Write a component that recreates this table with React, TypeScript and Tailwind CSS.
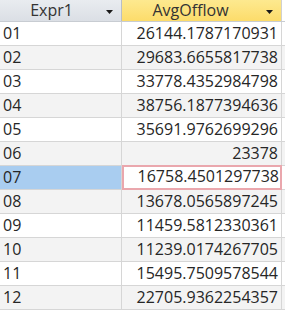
const rows = [
  ['01', '26144.1787170931'],
  ['02', '29683.6655817738'],
  ['03', '33778.4352984798'],
  ['04', '38756.1877394636'],
  ['05', '35691.9762699296'],
  ['06', '23378'],
  ['07', '16758.4501297738'],
  ['08', '13678.0565897245'],
  ['09', '11459.5812330361'],
  ['10', '11239.0174267705'],
  ['11', '15495.7509578544'],
  ['12', '22705.9362254357'],
];

const Arrow = () => (
  <svg width="7" height="4" viewBox="0 0 7 4" className="absolute right-[8px] top-[10px]">
    <path d="M0 0h7L3.5 4z" fill="#1a1a1a" />
  </svg>
);

export default function App() {
  return (
    <div className="w-[285px] h-[312px] bg-white overflow-hidden text-[#262626]" style={{ fontFamily: '"Open Sans", sans-serif' }}>
      <div className="flex h-[22px] border-b border-[#c8ccd2] text-[16px] leading-[21px] text-[#333]">
        <div className="relative w-[122px] border-r border-[#b9bec6] bg-gradient-to-b from-[#e9ecf0] to-[#dbdfe5] text-center pr-[18px]">
          Expr1
          <Arrow />
        </div>
        <div className="relative w-[160px] border-r border-[#d0d0d0] bg-gradient-to-b from-[#fde98f] to-[#fcdc6a] text-center pr-[22px]">
          AvgOfflow
          <Arrow />
        </div>
      </div>
      {rows.map(([a, b], i) => {
        const sel = a === '07';
        const alt = i % 2 === 1;
        return (
          <div key={a} className={`flex h-[24px] border-b border-[#d6d6d6] text-[16px] leading-[23px] ${alt ? 'bg-[#f3f3f3]' : 'bg-white'}`}>
            <div className={`w-[122px] border-r border-[#d6d6d6] pl-[3px] ${sel ? 'bg-[#a9cdf0]' : ''}`}>{a}</div>
            {sel ? (
              <div className="w-[160px] bg-white border-2 border-[#eaa7ad] text-right pr-[1px] leading-[19px] -mt-px h-[25px]">{b}</div>
            ) : (
              <div className="w-[160px] border-r border-[#d6d6d6] text-right pr-[3px]">{b}</div>
            )}
          </div>
        );
      })}
    </div>
  );
}
